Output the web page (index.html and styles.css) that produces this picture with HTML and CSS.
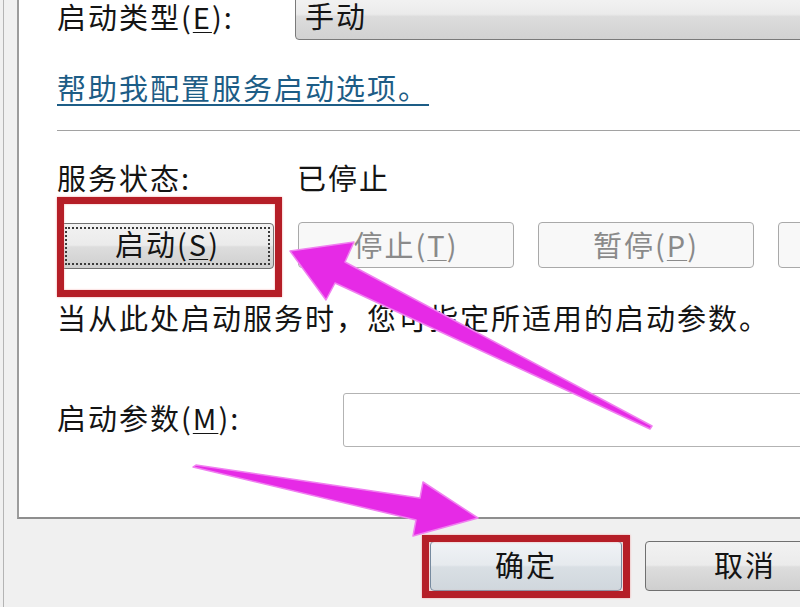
FILE: index.html
```html
<!DOCTYPE html>
<html lang="zh-CN">
<head>
    <meta charset="UTF-8">
    <meta name="viewport" content="width=device-width, initial-scale=1.0">
    <title>服务属性 - 常规</title>
    <link rel="stylesheet" href="styles.css">
</head>
<body>
    <div class="screen">
        <div class="panel">
            <div class="row row-type">
                <span class="label">启动类型(<u>E</u>):</span>
                <div class="combo">手动</div>
            </div>
            <a class="help-link">帮助我配置服务启动选项。</a>
            <div class="separator"></div>
            <div class="row row-status">
                <span class="label">服务状态:</span>
                <span class="status">已停止</span>
            </div>
            <div class="actions">
                <div class="marked marked-start">
                    <button class="btn btn-focus"><span>启动(<u>S</u>)</span></button>
                </div>
                <button class="btn" disabled>停止(<u>T</u>)</button>
                <button class="btn" disabled>暂停(<u>P</u>)</button>
                <button class="btn" disabled></button>
            </div>
            <p class="hint">当从此处启动服务时，您可指定所适用的启动参数。</p>
            <div class="row row-params">
                <span class="label">启动参数(<u>M</u>):</span>
                <div class="textbox"></div>
            </div>
        </div>
        <div class="footer">
            <div class="marked marked-ok">
                <button class="btn btn-ok">确定</button>
            </div>
            <button class="btn btn-cancel">取消</button>
        </div>
    </div>

    <svg class="arrows" width="800" height="607" viewBox="0 0 800 607">
        <polygon points="290,251 354,242 345,262 652,426 650,429 335,283 326,300"
                 fill="#e62ae6" stroke="#f080f0" stroke-width="1.5" stroke-linejoin="round"/>
        <polygon points="193,467 196,465 420,498 423,482 478,518 413,536 416,520"
                 fill="#e62ae6" stroke="#f080f0" stroke-width="1.5" stroke-linejoin="round"/>
    </svg>
</body>
</html>
```

FILE: styles.css
```css
body {
    margin: 0;
    width: 800px;
    height: 607px;
    overflow: hidden;
    background-color: #f0f0f0;
    font-family: "Noto Sans CJK SC", "Noto Sans", sans-serif;
    font-size: 29px;
    letter-spacing: 2px;
    color: #141414;
}

.screen {
    margin-left: 3px;
    height: 607px;
    border-left: 1px solid #b4b4b4;
}

.panel {
    margin-left: 13px;
    width: 900px;
    padding: 0 0 70px 38px;
    background-color: #fff;
    border-left: 2px solid #9c9c9c;
    border-bottom: 2px solid #8e8e8e;
}

.row {
    display: flex;
    align-items: center;
}

.label {
    width: 238px;
    flex: none;
    white-space: nowrap;
    padding-bottom: 6px;
}

u {
    text-decoration-thickness: 1px;
    text-underline-offset: 3px;
}

.row-type {
    height: 40px;
    align-items: flex-start;
}

.row-type .label {
    line-height: 32px;
    padding: 0;
}

.combo {
    box-sizing: border-box;
    width: 600px;
    height: 45px;
    margin-top: -5px;
    line-height: 38px;
    padding-left: 9px;
    border: 1px solid #7a7a7a;
    border-radius: 4px;
    background: linear-gradient(#f3f3f3 0%, #ebebeb 42%, #dcdcdc 48%, #d2d2d2 100%);
}

.help-link {
    display: block;
    margin-top: 27px;
    height: 40px;
    line-height: 40px;
    color: #1d5d86;
    text-decoration: underline;
    text-decoration-thickness: 2px;
    text-underline-offset: 4px;
    width: max-content;
    padding-right: 6px;
}

.separator {
    margin-top: 23px;
    height: 0;
    border-top: 1px solid #a2a2a2;
    border-bottom: 1px solid #fff;
}

.row-status {
    margin-top: 28px;
    height: 40px;
}

.status {
    margin-left: 2px;
    padding-bottom: 6px;
}

.actions {
    display: flex;
    gap: 24px;
    margin-top: 22px;
    padding-left: 1px;
    height: 46px;
}

.btn {
    box-sizing: border-box;
    flex: none;
    width: 216px;
    height: 46px;
    padding: 0 0 5px;
    font: inherit;
    letter-spacing: inherit;
    color: #141414;
    border: 1px solid #707070;
    border-radius: 4px;
    background: linear-gradient(#f2f2f2 0%, #ebebeb 48%, #dddddd 52%, #cfcfcf 100%);
}

.btn:disabled {
    color: #8a8a8a;
    border-color: #a9a9a9;
    background: #f8f8f8;
}

.btn-focus {
    padding: 0;
}

.btn-focus span {
    box-sizing: border-box;
    display: flex;
    align-items: center;
    justify-content: center;
    height: 38px;
    margin: 3px 3px 3px 6px;
    padding-bottom: 5px;
    border: 2px dotted #3a3a3a;
}

.marked {
    position: relative;
    flex: none;
}

.marked::after {
    content: "";
    position: absolute;
    border: 7px solid #b51e27;
    box-shadow: 0 0 2px #f3a0a0, inset 0 0 2px #f3a0a0;
}

.marked-start::after {
    top: -25px;
    bottom: -29px;
    left: -1px;
    right: -8px;
}

.hint {
    margin: 29px 0 0;
    height: 40px;
    line-height: 40px;
    white-space: nowrap;
}

.row-params {
    margin-top: 56px;
    height: 54px;
}

.row-params .label {
    width: 286px;
}

.textbox {
    box-sizing: border-box;
    width: 600px;
    height: 54px;
    border: 1px solid #b3b3b3;
    border-radius: 3px;
    background-color: #fff;
}

.footer {
    display: flex;
    gap: 23px;
    padding: 22px 0 0 426px;
}

.btn-ok,
.btn-cancel {
    height: 50px;
}

.btn-ok {
    width: 192px;
    border-color: #6f8aa0;
    background: linear-gradient(#f0f3f6 0%, #e6eaee 48%, #d9dfe4 52%, #d0d7dd 100%);
}

.btn-cancel {
    width: 200px;
}

.marked-ok::after {
    top: -6px;
    bottom: -7px;
    left: -8px;
    right: -8px;
}

.arrows {
    position: absolute;
    top: 0;
    left: 0;
    pointer-events: none;
}
```
